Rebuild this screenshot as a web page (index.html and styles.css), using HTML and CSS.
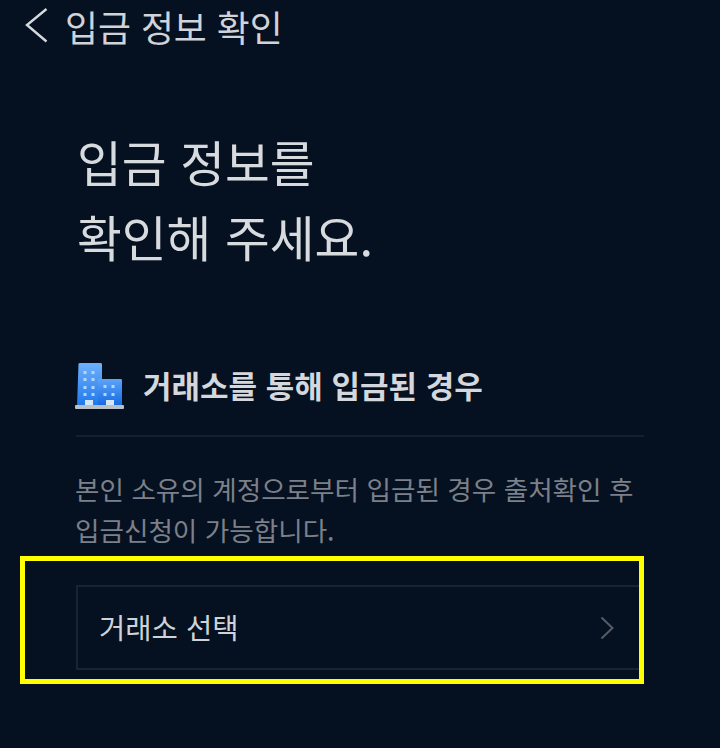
FILE: index.html
```html
<!DOCTYPE html>
<html lang="ko">
<head>
<meta charset="utf-8">
<title>입금 정보 확인</title>
<link rel="stylesheet" href="styles.css">
</head>
<body>
<div class="screen">
  <header class="topbar">
    <svg class="back" width="26" height="36" viewBox="0 0 26 36"><path d="M23.500 1 L4 17 L23.500 33.500" fill="none" stroke="#d5d8dc" stroke-width="2.400"/></svg>
    <span class="topbar-title">입금 정보 확인</span>
  </header>
  <main class="content">
    <h1 class="headline">입금 정보를<br>확인해 주세요.</h1>
    <div class="section-head">
      <svg class="building" width="50" height="48" viewBox="0 0 50 48">
        <defs>
          <linearGradient id="b1" x1="0" y1="0" x2="0" y2="1"><stop offset="0" stop-color="#6fb0fb"/><stop offset="1" stop-color="#1d78ec"/></linearGradient>
          <linearGradient id="b2" x1="0" y1="0" x2="0" y2="1"><stop offset="0" stop-color="#5da4f8"/><stop offset="1" stop-color="#1469e2"/></linearGradient>
        </defs>
        <path d="M3.500 2 Q3.500 1 5 1 H25.500 Q27 1 27 2 V44 H2 Z" fill="url(#b1)"/>
        <path d="M25 17 H45.500 Q47 17 47 18 V44 H23 V18 Q23 17 25 17Z" fill="url(#b2)"/>
        <g fill="#b5d6fb">
          <rect x="8.500" y="9" width="3" height="3"/><rect x="16.500" y="9" width="3" height="3"/>
          <rect x="8.500" y="16" width="3" height="3"/><rect x="16.500" y="16" width="3" height="3"/>
          <rect x="8.500" y="24" width="3" height="3"/><rect x="16.500" y="24" width="3" height="3"/>
          <rect x="8.500" y="31" width="3" height="3"/><rect x="16.500" y="31" width="3" height="3"/>
          <rect x="28.500" y="23" width="3" height="3"/><rect x="36.500" y="23" width="3" height="3"/>
          <rect x="28.500" y="31" width="3" height="3"/><rect x="36.500" y="31" width="3" height="3"/>
        </g>
        <rect x="10" y="38" width="8" height="6" fill="#d5e6f8"/>
        <rect x="31" y="38" width="8" height="6" fill="#d5e6f8"/>
        <rect x="0" y="43" width="49" height="4" rx="1" fill="#b9c0c8"/>
      </svg>
      <h2 class="section-title">거래소를 통해 입금된 경우</h2>
    </div>
    <hr class="divider">
    <p class="note">본인 소유의 계정으로부터 입금된 경우 출처확인 후<br>입금신청이 가능합니다.</p>
    <button class="select" type="button">
      <span class="select-label">거래소 선택</span>
      <svg width="14" height="24" viewBox="0 0 14 24"><path d="M1.500 1.500 L12.500 12 L1.500 22.500" fill="none" stroke="#565c66" stroke-width="2"/></svg>
    </button>
  </main>
  <div class="highlight"></div>
</div>
</body>
</html>
```
FILE: styles.css
```css
html, body {
  margin: 0;
  padding: 0;
  background: #051020;
}
.screen {
  position: relative;
  width: 720px;
  height: 748px;
  overflow: hidden;
  font-family: "Noto Sans CJK KR", "Noto Sans", sans-serif;
  color: #d8dbdf;
}
.topbar {
  display: flex;
  align-items: center;
  gap: 16px;
  height: 52px;
  padding-left: 23px;
}
.topbar-title {
  font-size: 35.800px;
  line-height: 52px;
  font-weight: 400;
  color: #d0d3d7;
}
.content {
  display: flex;
  flex-direction: column;
  padding: 72px 76px 0 76px;
}
.headline {
  margin: 0 0 0 1px;
  font-size: 48.700px;
  line-height: 75px;
  font-weight: 400;
  color: #d8dbde;
}
.section-head {
  display: flex;
  align-items: center;
  gap: 18px;
  margin-top: 86px;
  height: 50px;
}
.building {
  flex: none;
  margin: 2px 0 0 -1px;
}
.section-title {
  margin: 0;
  font-size: 31px;
  line-height: 48px;
  font-weight: 700;
  color: #d4d7db;
}
.divider {
  width: 100%;
  height: 2px;
  margin: 25px 0 0;
  border: 0;
  background: #161f2d;
}
.note {
  margin: 31px 0 0 -1px;
  font-size: 26.600px;
  line-height: 41px;
  color: #7b808a;
  white-space: nowrap;
}
.select {
  display: flex;
  align-items: center;
  justify-content: space-between;
  width: 100%;
  height: 85px;
  margin-top: 35px;
  padding: 0 28px 0 21px;
  border: 2px solid #1a2332;
  background: transparent;
  font-family: inherit;
  font-size: 28.600px;
  color: #cfd2d6;
}
.select-label {
  line-height: 40px;
  padding-bottom: 2px;
}
.highlight {
  position: absolute;
  left: 20px;
  top: 556px;
  width: 614px;
  height: 118px;
  border: 5px solid #ffff00;
}
```
